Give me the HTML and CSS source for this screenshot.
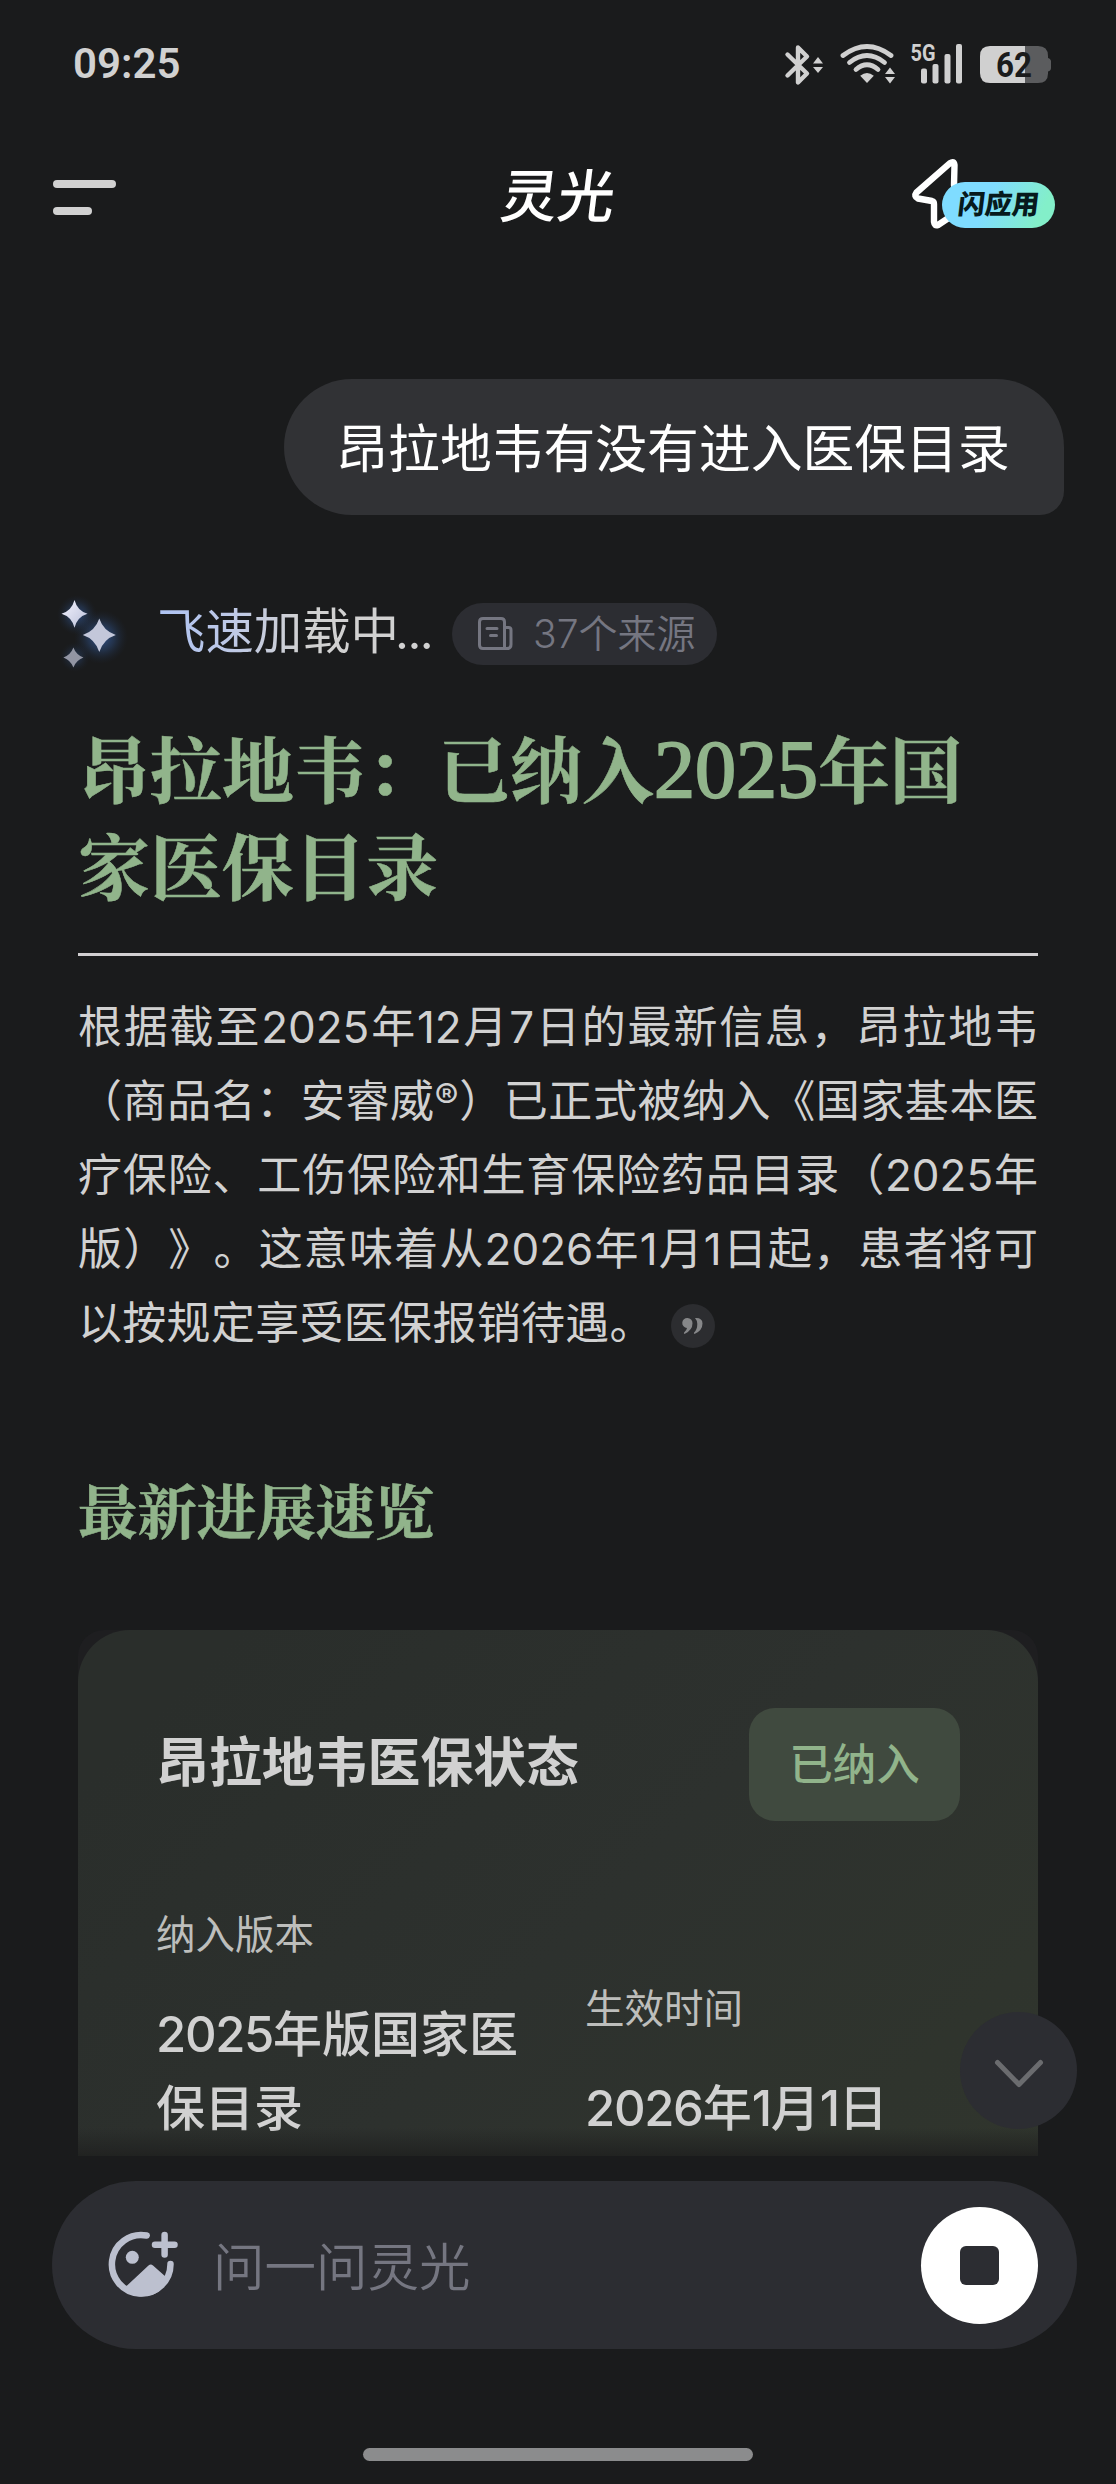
FILE: index.html
```html
<!DOCTYPE html>
<html lang="zh-CN">
<head>
<meta charset="utf-8">
<meta name="viewport" content="width=device-width">
<title>灵光</title>
<link rel="stylesheet" href="styles.css">
</head>
<body>
<div class="screen">
  <div class="status">
    <span class="time">09:25</span>
    <svg class="status-icons" viewBox="784 40 268 48" width="268" height="48">
      <g fill="none" stroke="#d0d0d0" stroke-width="4.4" stroke-linecap="round" stroke-linejoin="round">
        <path d="M787.5 54.500L807 73.500 798 82.500V47.500L807 56.500 787.500 75.500"/>
      </g>
      <g fill="#d0d0d0">
        <path d="M818 57l5 6.500h-10zM818 73l5-6h-10z"/>
        <path d="M890 67.500l5 6.500h-10zM890 83.500l5-6.500h-10z"/>
        <path d="M867 83l-6.800-7.200q6.800-5.600 13.600 0z"/>
      </g>
      <g fill="none" stroke="#d0d0d0" stroke-width="4.8" stroke-linecap="round">
        <path d="M843 55.500Q867 37.500 891 55.500"/>
        <path d="M849.500 62.500Q867 48.500 884.500 62.500"/>
        <path d="M856 69.500Q867 60 878 69.500"/>
      </g>
      <text class="net" x="910.500" y="61" textLength="25" lengthAdjust="spacingAndGlyphs">5G</text>
      <g fill="#d0d0d0">
        <rect x="921" y="68.500" width="6" height="15" rx="2"/>
        <rect x="932.500" y="64" width="6" height="19.500" rx="2"/>
        <rect x="944.500" y="54" width="6" height="29.500" rx="2"/>
        <rect x="956" y="44" width="6" height="39.500" rx="2"/>
      </g>
      <path d="M1025 46h13q10 0 10 10v2q3 1 3 3.500v6.500q0 2.500-3 3.500v2q0 9.500-10 9.500h-13z" fill="#5b5c5e"/>
      <path d="M1025 46v37h-35q-10 0-10-10V56q0-10 10-10z" fill="#d0d0d0"/>
      <text class="level" x="996" y="76.500" textLength="36" lengthAdjust="spacingAndGlyphs">62</text>
    </svg>
  </div>

  <header class="topbar">
    <div class="menu"><i class="menu-long"></i><i class="menu-short"></i></div>
    <h1 class="brand">灵光</h1>
    <div class="flash">
      <svg class="bolt" viewBox="911 158 52 74" width="52" height="74">
        <path d="M954 186L954.500 166Q954 161.500 950 164.200L916.500 193.500Q913.500 197.500 918 199.500L932 202Q934 202.500 934 205V223Q934.500 227.500 938 226L950 218" fill="none" stroke="#fff" stroke-width="6.400" stroke-linejoin="round" stroke-linecap="round"/>
      </svg>
      <span class="flash-pill"><span class="flash-text">闪应用</span></span>
    </div>
  </header>

  <main class="feed">
    <div class="bubble">昂拉地韦有没有进入医保目录</div>

    <div class="progress">
      <svg class="sparkles" viewBox="50 592 82 84" width="82" height="84">
        <defs>
          <linearGradient id="star" x1="0" y1="0" x2="1" y2="1"><stop offset="0" stop-color="#f4f4ff"/><stop offset="1" stop-color="#b9bfd8"/></linearGradient>
          <radialGradient id="glow"><stop offset="0" stop-color="#3c68b8" stop-opacity=".75"/><stop offset=".5" stop-color="#31558f" stop-opacity=".4"/><stop offset="1" stop-color="#1e2c45" stop-opacity="0"/></radialGradient>
        </defs>
        <circle cx="77" cy="615" r="20" fill="url(#glow)" opacity=".8"/>
        <circle cx="101" cy="637" r="27" fill="url(#glow)"/>
        <circle cx="75" cy="657" r="15" fill="url(#glow)" opacity=".5"/>
        <path d="M74.500 600q2.800 10.800 13 13.700q-10.200 3-13 14q-2.800-11-13-14q10.200-2.900 13-13.700z" fill="url(#star)"/>
        <path d="M99.300 618.500q4.200 12.500 16.500 16.500q-12.300 4-16.500 17q-4.200-13-16.500-17q12.300-4 16.500-16.500z" fill="#c3c7da"/>
        <path d="M73.400 647.500q2.700 7.300 10 10q-7.300 2.700-10 10q-2.700-7.300-10-10q7.300-2.700 10-10z" fill="#9295a3"/>
      </svg>
      <span class="loading">飞速加载中<span class="dots">...</span></span>
      <div class="sources">
        <svg viewBox="477 614 36 36" width="36" height="36" fill="none" stroke="#757681" stroke-width="3" stroke-linejoin="round" stroke-linecap="round">
          <path d="M504.500 646.500V620q0-3.500-3.500-3.500H483q-3.500 0-3.500 3.500v23q0 3.500 3.500 3.500h24q4 0 4-4V628q0-2.500-2.500-2.500h-4"/>
          <path d="M487 626.500h10M490.500 633.500h6"/>
        </svg>
        <span>37个来源</span>
      </div>
    </div>

    <article class="answer">
      <h2 class="title">昂拉地韦：已纳入<span class="title-num">2025</span>年国<br>家医保目录</h2>
      <hr class="rule">
      <div class="para">
        <p>根据截至2025年12月7日的最新信息，昂拉地韦</p>
        <p>（商品名：安睿威<span class="reg">®</span>）已正式被纳入《国家基本医</p>
        <p>疗保险、工伤保险和生育保险药品目录（2025年</p>
        <p>版）》。这意味着从2026年1月1日起，患者将可</p>
        <p class="para-last">以按规定享受医保报销待遇。<span class="cite"><svg viewBox="0 0 22 18" width="22" height="18" fill="#868789"><path d="M5.500 1a5 5 0 0 1 5 5.200q0 7-8 10.800q-1-.4-.4-1.400Q4.600 13.600 5 11A5 5 0 0 1 5.500 1z"/><path d="M13 1q7.500-.5 7.500 5.500q0 7-8 10.500q-1-.4-.4-1.400q3.200-3.200 3.200-8.600Q15.300 3.500 13 1z"/></svg></span></p>
      </div>
      <h3 class="section">最新进展速览</h3>
      <div class="card-wrap">
        <div class="card">
          <div class="card-head">
            <h4 class="card-title">昂拉地韦医保状态</h4>
            <span class="badge">已纳入</span>
          </div>
          <div class="facts">
            <div class="fact"><div class="label">纳入版本</div><div class="value"><span class="digits">2025</span>年版国家医<br>保目录</div></div>
            <div class="fact"><div class="label">生效时间</div><div class="value"><span class="digits">2026</span>年<span class="digits">1</span>月<span class="digits">1</span>日</div></div>
          </div>
        </div>
      </div>
    </article>
    <div class="fade"></div>
    <div class="to-bottom">
      <svg viewBox="0 0 50 30" width="50" height="30"><path d="M3.500 3.500L25 25.500 46.500 3.500" fill="none" stroke="#6b6c6f" stroke-width="5" stroke-linecap="round" stroke-linejoin="round"/></svg>
    </div>
  </main>

  <footer class="composer">
    <svg viewBox="106 2229 74 72" width="74" height="72">
      <path d="M146.700 2235.500A29.300 29.300 0 1 0 170.500 2264" fill="none" stroke="#bcc0cf" stroke-width="6.500" stroke-linecap="round"/>
      <path d="M126 2286.500L148.500 2265.500Q150.800 2263.500 153 2265.500L166 2277L170 2270Q166 2296.500 141 2296.500Q132 2296 124 2290z" fill="#bcc0cf"/>
      <circle cx="132.300" cy="2257.300" r="6.500" fill="#bcc0cf"/>
      <path d="M164.600 2235v19.500M155 2244.700h19.500" stroke="#bcc0cf" stroke-width="6.500" stroke-linecap="round"/>
    </svg>
    <span class="hint">问一问灵光</span>
    <div class="stop"><i></i></div>
  </footer>
  <div class="home"></div>
</div>
</body>
</html>
```
FILE: styles.css
```css
* { box-sizing: border-box; margin: 0; padding: 0; }
body {
  background: #1a1b1c;
  font-family: Inter, "Noto Sans CJK SC", sans-serif;
  font-weight: 400;
  color: #d1d1d1;
  text-spacing-trim: space-all;
}
.screen { width: 1116px; height: 2484px; display: flex; flex-direction: column; overflow: hidden; }
svg { display: block; flex: none; }

.status { height: 128px; padding: 0 64px 0 73px; display: flex; justify-content: space-between; align-items: center; }
.time { font: 600 42px/50px Roboto, sans-serif; }
.status-icons text { font-family: Roboto, sans-serif; }
.net { font-size: 24px; font-weight: 700; fill: #d0d0d0; }
.level { font-size: 35px; font-weight: 700; fill: #1a1b1c; }

.topbar { height: 138px; padding: 0 61px 0 53px; display: grid; grid-template-columns: 1fr auto 1fr; align-items: center; }
.menu { display: grid; gap: 19px; }
.menu i { display: block; height: 8px; border-radius: 4px; background: #d1d1d1; }
.menu-long { width: 63px; }
.menu-short { width: 39px; }
.brand { padding-left: 7px; font-size: 57px; line-height: 72px; font-weight: 500; color: #fff; transform: skewX(-7deg); }
.flash { justify-self: end; display: flex; align-items: flex-end; padding-bottom: 6px; }
.bolt { margin-right: -21px; }
.flash-pill { width: 113px; height: 46px; margin-bottom: 3px; border-radius: 23px; background: linear-gradient(115deg, #7fdcff 40%, #83efc9 85%); display: flex; justify-content: center; align-items: center; position: relative; }
.flash-text { font-size: 27px; font-weight: 800; line-height: 40px; color: #071a1c; transform: skewX(-7deg); }

.feed { height: 1890px; position: relative; overflow: visible; padding: 113px 52px 0; display: flex; flex-direction: column; }
.bubble { align-self: flex-end; width: 780px; height: 136px; padding-right: 2px; border-radius: 68px 68px 24px 68px; background: #313235; color: #fff; font-size: 51.800px; line-height: 141px; text-align: center; white-space: nowrap; }

.progress { height: 84px; margin-top: 77px; display: flex; align-items: center; }
.sparkles { margin-left: -2px; }
.loading { width: 306px; padding: 0 0 4px 25px; font-size: 48.400px; line-height: 72px; white-space: nowrap; font-weight: 400; background: linear-gradient(90deg, #aec3f2 10%, #bfc9e5 34%, #d1d1d1 56%); -webkit-background-clip: text; background-clip: text; color: transparent; }
.dots { margin-left: -4px; letter-spacing: -1.500px; }
.sources { width: 265px; height: 62px; margin-left: 14px; padding-left: 25px; border-radius: 31px; background: #2c2d32; color: #757681; font-size: 39px; line-height: 62px; font-weight: 350; display: flex; align-items: center; gap: 20px; white-space: nowrap; }

.answer { margin: 24px 26px 0; padding-top: 18px; height: 1456px; overflow: hidden; flex: none; }
.title { font-family: "Noto Serif CJK SC", "Noto Serif SC", "Noto Sans CJK SC", serif; font-size: 72px; line-height: 97px; font-weight: 700; color: #91b48b; white-space: nowrap; -webkit-text-stroke: .5px #91b48b; }
.title-num { font-family: "Liberation Serif", serif; font-size: 82px; line-height: 1px; font-weight: 400; -webkit-text-stroke: 2px #91b48b; }
.rule { border: 0; height: 3px; background: #d1cfd1; margin-top: 41px; }
.para { margin-top: 34px; font-size: 44px; line-height: 74px; }
.para p { height: 74px; white-space: nowrap; text-align: justify; text-align-last: justify; }
.para .para-last { display: flex; align-items: center; text-align-last: left; letter-spacing: .300px; }
.reg { font-size: 36px; position: relative; top: -8px; line-height: 1px; }
.cite { width: 44px; height: 44px; margin-left: 17px; margin-top: 5px; border-radius: 50%; background: #2c2d30; display: flex; align-items: center; justify-content: center; }
.section { margin-top: 105px; height: 88px; font-family: "Noto Serif CJK SC", "Noto Serif SC", "Noto Sans CJK SC", serif; font-size: 59.400px; line-height: 88px; font-weight: 700; color: #91b48b; -webkit-text-stroke: .5px #91b48b; }
.card-wrap { margin-top: 77px; border-radius: 26px; background: #1e1e20; }
.card { height: 640px; padding: 78px; border-radius: 52px; background: linear-gradient(135deg, #2a2e2b 10%, #2d312e 50%, #2f342d 80%, #30352d); }
.card-head { display: flex; justify-content: space-between; align-items: center; height: 113px; }
.card-title { font-size: 52.900px; font-weight: 700; line-height: 80px; padding-bottom: 3px; }
.badge { width: 211px; height: 113px; border-radius: 26px; background: #404a3f; color: #91b48b; font-size: 43.500px; font-weight: 500; line-height: 113px; text-align: center; }
.facts { margin-top: 77px; display: grid; grid-template-columns: 375px 375px; column-gap: 54px; align-items: end; }
.label { font-size: 39.500px; line-height: 74px; color: #bdbebc; }
.value { margin-top: 26px; font-size: 49px; line-height: 74px; font-weight: 500; white-space: nowrap; }
.digits { letter-spacing: -1.300px; }

.fade { position: absolute; left: 78px; width: 960px; top: 1862px; height: 28px; background: linear-gradient(#1f212000, #202120e8); }
.to-bottom { position: absolute; left: 960px; top: 1746px; width: 117px; height: 117px; border-radius: 50%; background: #2c2d32; display: flex; align-items: center; justify-content: center; padding-top: 6px; }

.composer { margin: 25px 39px 0 52px; height: 168px; flex: none; border-radius: 84px; background: #2c2d32; display: flex; align-items: center; padding: 0 39px 0 54px; }
.hint { flex: 1; padding: 3px 0 0 33px; color: #757681; font-size: 51.500px; line-height: 76px; font-weight: 350; }
.stop { width: 117px; height: 117px; border-radius: 50%; background: #fff; display: flex; align-items: center; justify-content: center; }
.stop i { width: 39px; height: 39px; border-radius: 6px; background: #2c2d32; }
.home { width: 390px; height: 13px; margin: 99px 0 0 363px; border-radius: 7px; background: #8b8c8d; }
```
